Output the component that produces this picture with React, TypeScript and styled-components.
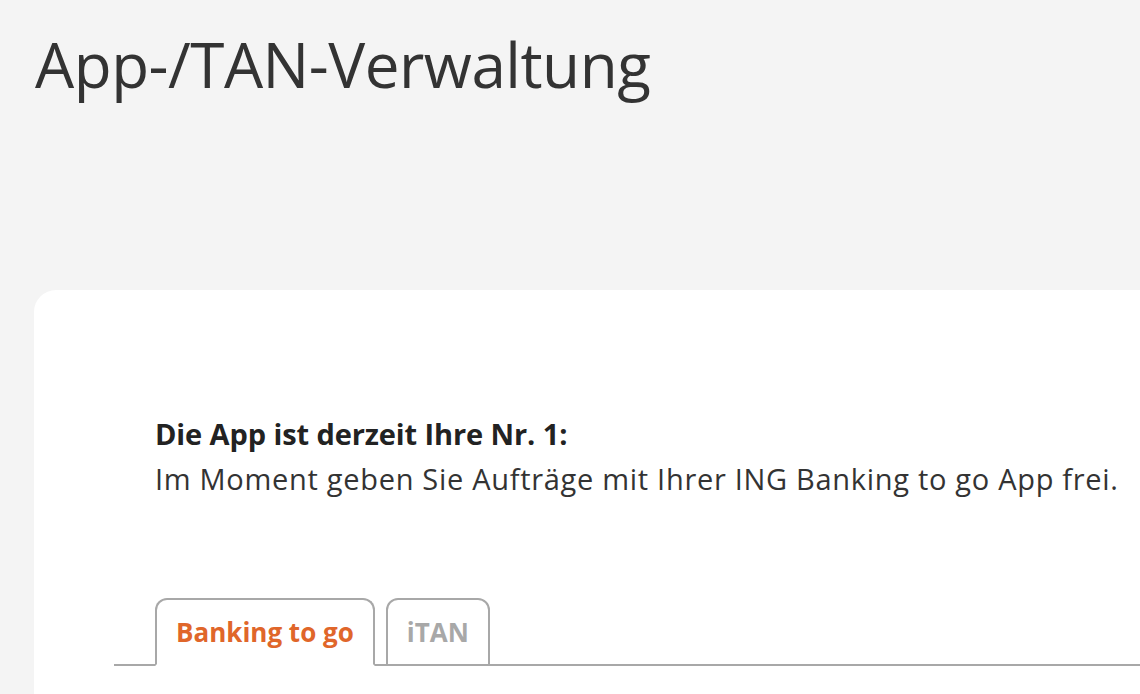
import styled, { createGlobalStyle } from 'styled-components';

const GlobalStyle = createGlobalStyle`
    html, body {
        margin: 0;
        padding: 0;
        background: #f4f4f4;
        overflow: hidden;
    }
    body {
        font-family: "Open Sans", "Noto Sans", sans-serif;
        color: #333333;
    }
`

const Page = styled.main`
    width: 1140px;
    height: 694px;
    display: flex;
    flex-direction: column;
`

const Title = styled.h1`
    margin: 0;
    padding: 24px 0 0 35px;
    height: 290px;
    box-sizing: border-box;
    font-size: 62px;
    font-weight: 400;
    line-height: 80px;
    letter-spacing: -0.5px;
    color: #333333;
`

const Card = styled.section`
    flex: 1;
    margin-left: 34px;
    margin-right: -40px;
    background: #ffffff;
    border-radius: 22px 0 0 0;
    padding: 122px 0 0 80px;
`

const Intro = styled.div`
    padding-left: 41px;
    font-size: 29px;
    line-height: 45px;
    letter-spacing: 0.7px;
    color: #333333;

    strong {
        display: block;
        line-height: 44px;
        font-weight: 700;
        letter-spacing: -0.1px;
        color: #222222;
    }
`

const TabBar = styled.nav`
    margin-top: 97px;
    display: flex;
    gap: 11px;
    padding-left: 41px;
    border-bottom: 2px solid #a8a8a8;
`

const Tab = styled.button<{ $active?: boolean }>`
    margin-bottom: -2px;
    padding: 0 19px;
    height: 68px;
    font-family: inherit;
    font-size: 26px;
    font-weight: 700;
    color: ${p => p.$active ? '#e0662a' : '#a8a8a8'};
    background: #ffffff;
    border: 2px solid #a8a8a8;
    border-bottom-color: ${p => p.$active ? '#ffffff' : '#a8a8a8'};
    border-radius: 12px 12px 0 0;
    cursor: pointer;
`

export default function App(){
    return(
        <Page>
            <GlobalStyle />
            <Title>App-/TAN-Verwaltung</Title>
            <Card>
                <Intro>
                    <strong>Die App ist derzeit Ihre Nr. 1:</strong>
                    Im Moment geben Sie Aufträge mit Ihrer ING Banking to go App frei.
                </Intro>
                <TabBar>
                    <Tab $active>Banking to go</Tab>
                    <Tab>iTAN</Tab>
                </TabBar>
            </Card>
        </Page>
    )
}
